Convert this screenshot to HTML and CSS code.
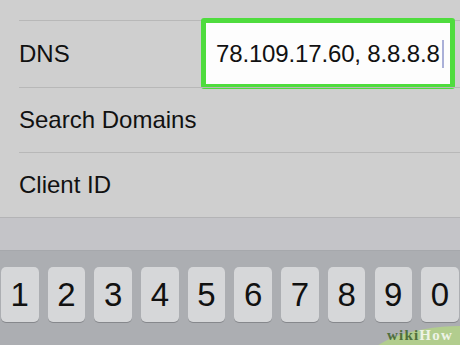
FILE: index.html
```html
<!DOCTYPE html>
<html>
<head>
<meta charset="utf-8">
<link rel="stylesheet" href="styles.css">
</head>
<body>
<div class="screen">
  <div class="settings">
    <div class="spacer"></div>
    <div class="row row-dns">
      <div class="cell"><span class="label">DNS</span></div>
      <div class="field"><span class="value">78.109.17.60, 8.8.8.8</span><span class="caret"></span></div>
    </div>
    <div class="row">
      <div class="cell"><span class="label">Search Domains</span></div>
    </div>
    <div class="row last">
      <div class="cell"><span class="label">Client ID</span></div>
    </div>
  </div>
  <div class="toolbar"></div>
  <div class="keyboard">
    <div class="keys">
      <div class="key">1</div>
      <div class="key">2</div>
      <div class="key">3</div>
      <div class="key">4</div>
      <div class="key">5</div>
      <div class="key">6</div>
      <div class="key">7</div>
      <div class="key">8</div>
      <div class="key">9</div>
      <div class="key">0</div>
    </div>
    <div class="blob"></div>
    <div class="wikihow"><span class="wiki">wiki</span><span class="how">How</span></div>
  </div>
</div>
</body>
</html>
```

FILE: styles.css
```css
html, body {
  margin: 0;
  padding: 0;
}
body {
  width: 460px;
  height: 345px;
  overflow: hidden;
  font-family: "Liberation Sans", Arial, sans-serif;
  background: #cfcfcf;
}
.screen {
  width: 460px;
  height: 345px;
  display: flex;
  flex-direction: column;
}
.settings {
  background: #cfcfcf;
  border-bottom: 1px solid #b4b4b6;
}
.spacer {
  height: 20px;
}
.row {
  position: relative;
  padding-left: 19px;
}
.cell {
  border-top: 1px solid #b8b8b8;
  height: 64px;
  display: flex;
  align-items: center;
}
.row-dns .cell {
  height: 66px;
}
.label {
  font-size: 24px;
  color: #111;
}
.field {
  position: absolute;
  left: 201px;
  top: -2px;
  width: 244px;
  height: 61px;
  border: 5px solid #4fdc3e;
  border-radius: 3px;
  background: #fdfdfd;
  display: flex;
  align-items: center;
  padding-left: 10px;
  box-sizing: content-box;
}
.field {
  width: 234px;
}
.value {
  font-size: 24px;
  color: #111;
  letter-spacing: -0.15px;
}
.caret {
  width: 2px;
  height: 28px;
  background: #aab0d8;
  margin-left: 2px;
}
.toolbar {
  height: 32px;
  background: #c4c4c8;
}
.keyboard {
  position: relative;
  flex: 1;
  background: #acaeb2;
  border-top: 1px solid #a6a8ac;
  overflow: hidden;
}
.keys {
  display: grid;
  grid-template-columns: repeat(10, 37.5px);
  column-gap: 9.2px;
  padding: 16px 0 0 1px;
}
.key {
  height: 55px;
  background: #d6d7d9;
  border-radius: 5px;
  box-shadow: 0 1px 0 #86888c;
  display: flex;
  align-items: center;
  justify-content: center;
  font-size: 33px;
  color: #111;
}
.blob {
  position: absolute;
  left: 362px;
  top: 75px;
  width: 200px;
  height: 84px;
  border-radius: 50%;
  background: #b2cd8e;
}
.wikihow {
  position: absolute;
  left: 387px;
  top: 76px;
  font-family: "Liberation Serif", "Times New Roman", serif;
  font-weight: bold;
  font-size: 15px;
  letter-spacing: 1.2px;
}
.wiki {
  color: #4f6f3c;
}
.how {
  color: #eef3e6;
}
```
